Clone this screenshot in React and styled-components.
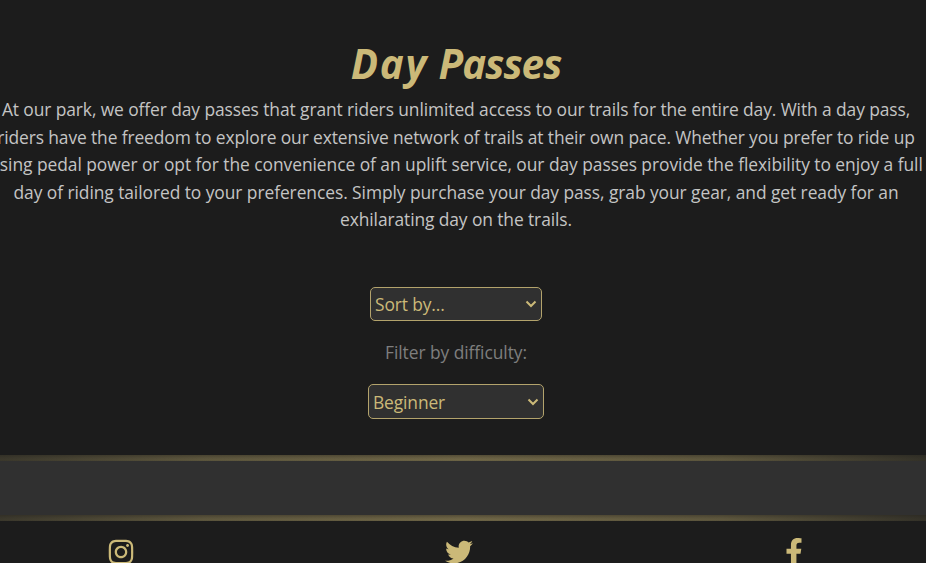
import React from 'react';
import styled, { createGlobalStyle } from 'styled-components';
import { FaInstagram, FaTwitter, FaFacebookF } from 'react-icons/fa';

const GlobalStyle = createGlobalStyle`
  * { box-sizing: border-box; }
  body { margin: 0; background: #1c1c1c; overflow: hidden; }
`;

const Page = styled.div`
  height: 563px;
  overflow: hidden;
  display: flex;
  flex-direction: column;
  background: #1c1c1c;
  color: #c4c4c4;
  font: 17.4px/27.4px 'Open Sans', sans-serif;
`;

const Main = styled.main`
  width: 912px;
  height: 455px;
  flex: none;
  display: flex;
  flex-direction: column;
  align-items: center;
`;

const Title = styled.h1`
  margin: 39px 0 0;
  height: 57.3px;
  font-size: 40.4px;
  line-height: 50px;
  font-style: italic;
  font-weight: 700;
  color: #cbb978;
`;

const Word = styled.span`
  letter-spacing: ${(p) => p.$tracking}px;
`;

const Intro = styled.p`
  margin: 0;
  display: flex;
  flex-direction: column;
  align-items: center;
`;

const Line = styled.span`
  white-space: nowrap;
  letter-spacing: ${(p) => p.$tracking}px;
`;

const Select = styled.button`
  width: ${(p) => p.$width}px;
  height: ${(p) => p.$height}px;
  flex: none;
  margin: ${(p) => p.$top}px 0 0;
  padding: 0 4px;
  display: flex;
  align-items: center;
  justify-content: space-between;
  border: 1px solid #b3a36c;
  border-radius: 5px;
  background: #303030;
  color: #cbb978;
  font: 17.4px/32px 'Open Sans', sans-serif;
  letter-spacing: -0.12px;
`;

const Chevron = styled.svg`
  width: 12px;
  height: 8px;
  fill: none;
  stroke: currentColor;
  stroke-width: 2;
`;

const Label = styled.label`
  margin-top: 18px;
  color: #7e7e7e;
  letter-spacing: -0.06px;
`;

const Rule = styled.div`
  height: 6px;
  flex: none;
  background:
    linear-gradient(90deg, rgba(32, 32, 30, 0.65), rgba(40, 40, 34, 0.25) 22%, transparent 50%, rgba(40, 40, 34, 0.25) 78%, rgba(32, 32, 30, 0.75)),
    linear-gradient(#544d36, #6a6144 50%, #716847 80%, #665e42);
`;

const Band = styled.section`
  height: 54px;
  flex: none;
  background: #303030;
`;

const Footer = styled.footer`
  flex: 1;
  min-height: 0;
  padding-top: 17px;
  display: flex;
  color: #cbb978;
`;

const Social = styled.a`
  width: ${(p) => p.$width}px;
  flex: none;
  display: flex;
  justify-content: center;
  font-size: 28px;
`;

const lines = [
  ['At our park, we offer day passes that grant riders unlimited access to our trails for the entire day. With a day pass,', -0.09],
  ['riders have the freedom to explore our extensive network of trails at their own pace. Whether you prefer to ride up', -0.112],
  ['using pedal power or opt for the convenience of an uplift service, our day passes provide the flexibility to enjoy a full', -0.047],
  ['day of riding tailored to your preferences. Simply purchase your day pass, grab your gear, and get ready for an', -0.065],
  ['exhilarating day on the trails.', -0.097],
];

function Dropdown({ text, width, height, top }) {
  return (
    <Select $width={width} $height={height} $top={top}>
      {text}
      <Chevron viewBox="0 0 12 8"><path d="M1.5 1.5 6 6l4.500-4.500" /></Chevron>
    </Select>
  );
}

export default function App() {
  return (
    <Page>
      <GlobalStyle />
      <Main>
        <Title><Word $tracking={1.7}>Day</Word> <Word $tracking={-0.95}>Passes</Word></Title>
        <Intro>
          {lines.map(([text, tracking]) => <Line key={text} $tracking={tracking}>{text}</Line>)}
        </Intro>
        <Dropdown text="Sort by..." width={172} height={34} top={53.5} />
        <Label>Filter by difficulty:</Label>
        <Dropdown text="Beginner" width={176} height={35} top={18} />
      </Main>
      <Rule />
      <Band />
      <Rule />
      <Footer>
        <Social $width={241}><FaInstagram /></Social>
        <Social $width={435}><FaTwitter /></Social>
        <Social $width={236}><FaFacebookF /></Social>
      </Footer>
    </Page>
  );
}
